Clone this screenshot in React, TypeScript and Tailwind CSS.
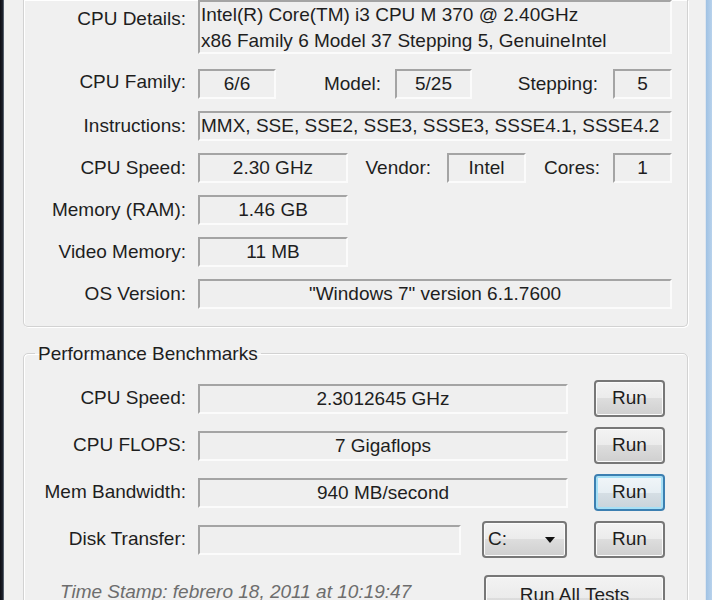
import React from "react";

const btnFace =
  "flex items-center rounded-[4px] border-2 border-[#777777] bg-[linear-gradient(#f3f3f3,#ebebeb_50%,#dddddd_50%,#cfcfcf)] shadow-[inset_0_0_0_1px_#fbfbfb] text-[#1e1e1e]";
const btn = `${btnFace} justify-center`;
const btnFocus =
  "flex items-center justify-center rounded-[4px] border-2 border-[#3c7fb1] bg-[linear-gradient(#f1f6f9,#e6eef3_50%,#d6dfe5_50%,#c9d3da)] shadow-[inset_0_0_0_2px_#a6e0f6] text-[#1e1e1e]";
const field =
  "h-[30px] border-t-2 border-l-2 border-b-2 border-r-2 border-t-[#a4a4a4] border-l-[#a4a4a4] border-b-[#fbfbfb] border-r-[#fbfbfb] bg-[#efefef] leading-[26px] whitespace-nowrap";
const group =
  "rounded-[5px] border border-[#d2d2d2] shadow-[1px_1px_0_#ffffff,inset_1px_1px_0_#ffffff]";

function Label({ children, top = false }: { children: React.ReactNode; top?: boolean }) {
  return (
    <div className={`text-right whitespace-nowrap ${top ? "pt-[5px]" : "self-center"}`}>
      {children}
    </div>
  );
}

function RunButton({ focus = false }: { focus?: boolean }) {
  return <div className={`${focus ? btnFocus : btn} h-[37px] w-[71px]`}>Run</div>;
}

function BenchRow({ label, value, focus = false }: { label: string; value: string; focus?: boolean }) {
  return (
    <>
      <Label>{label}</Label>
      <div className="flex h-[37px] items-center">
        <div className={`${field} w-[370px] text-center`}>{value}</div>
        <div className="ml-[26px]">
          <RunButton focus={focus} />
        </div>
      </div>
    </>
  );
}

export default function App() {
  return (
    <div className="flex h-[600px] w-[712px] overflow-hidden bg-[#f0f0f0] font-['Liberation_Sans','Arial',sans-serif] text-[19px] text-[#1e1e1e]">
      {/* window frame, left */}
      <div className="w-[4px] shrink-0 bg-[linear-gradient(to_right,#0d0d14,#1f2530_75%,#8a96a3)]" />

      <div className="flex-1 pl-[19px] pr-[17px]">
        {/* System info group (top edge is above the view) */}
        <div className={`${group} rounded-t-none border-t-0 pb-[17px] pr-[15px]`}>
          <div className="grid grid-cols-[162px_1fr] gap-x-[12px] gap-y-[12px]">
            <Label top>CPU Details:</Label>
            <div className={`${field} h-[54px] px-[1px] leading-[24px]`}>
              <div>Intel(R) Core(TM) i3 CPU M 370 @ 2.40GHz</div>
              <div>x86 Family 6 Model 37 Stepping 5, GenuineIntel</div>
            </div>

            <Label>CPU Family:</Label>
            <div className="mt-[3px] flex items-center">
              <div className={`${field} w-[78px] text-center`}>6/6</div>
              <div className="w-[105px] text-right">Model:</div>
              <div className={`${field} ml-[14px] w-[77px] text-center`}>5/25</div>
              <div className="w-[126px] text-right">Stepping:</div>
              <div className={`${field} ml-[15px] w-[59px] text-center`}>5</div>
            </div>

            <Label>Instructions:</Label>
            <div className={`${field} px-[1px]`}>MMX, SSE, SSE2, SSE3, SSSE3, SSSE4.1, SSSE4.2</div>

            <Label>CPU Speed:</Label>
            <div className="flex items-center">
              <div className={`${field} w-[150px] text-center`}>2.30 GHz</div>
              <div className="w-[83px] text-right">Vendor:</div>
              <div className={`${field} ml-[16px] w-[79px] text-center`}>Intel</div>
              <div className="w-[74px] text-right">Cores:</div>
              <div className={`${field} ml-[13px] w-[59px] text-center`}>1</div>
            </div>

            <Label>Memory (RAM):</Label>
            <div className={`${field} w-[150px] text-center`}>1.46 GB</div>

            <Label>Video Memory:</Label>
            <div className={`${field} w-[150px] text-center`}>11 MB</div>

            <Label>OS Version:</Label>
            <div className={`${field} text-center`}>"Windows 7" version 6.1.7600</div>
          </div>
        </div>

        {/* Performance Benchmarks group */}
        <fieldset className={`${group} mt-[14px] pt-[14px] pr-[22px]`}>
          <legend className="ml-[11px] px-[3px] leading-[25px]">Performance Benchmarks</legend>
          <div className="grid grid-cols-[162px_1fr] gap-x-[12px] gap-y-[10px]">
            <BenchRow label="CPU Speed:" value="2.3012645 GHz" />
            <BenchRow label="CPU FLOPS:" value="7 Gigaflops" />
            <BenchRow label="Mem Bandwidth:" value="940 MB/second" focus />

            <Label>Disk Transfer:</Label>
            <div className="flex h-[37px] items-center">
              <div className={`${field} w-[263px]`} />
              <div className={`${btnFace} ml-[21px] h-[37px] w-[85px] justify-between pl-[4px] pr-[10px]`}>
                <span>C:</span>
                <svg width="10" height="6" viewBox="0 0 10 6" aria-hidden="true">
                  <polygon points="0,0 10,0 5,6" fill="#111111" />
                </svg>
              </div>
              <div className="ml-[27px]">
                <RunButton />
              </div>
            </div>
          </div>

          <div className="mt-[17px] flex items-start">
            <div className="ml-[36px] w-[424px] pt-[3px] italic text-[#6d6d6d] whitespace-nowrap">
              Time Stamp: febrero 18, 2011 at 10:19:47
            </div>
            <div className={`${btn} h-[45px] w-[181px] items-start pt-[4px]`}>Run All Tests</div>
          </div>
        </fieldset>
      </div>

      {/* window frame, right */}
      <div className="w-[1px] shrink-0 bg-[#dfe6ee]" />
      <div className="w-[6px] shrink-0 bg-[linear-gradient(to_right,#9fc1e3,#b8d2ec)]" />
    </div>
  );
}
